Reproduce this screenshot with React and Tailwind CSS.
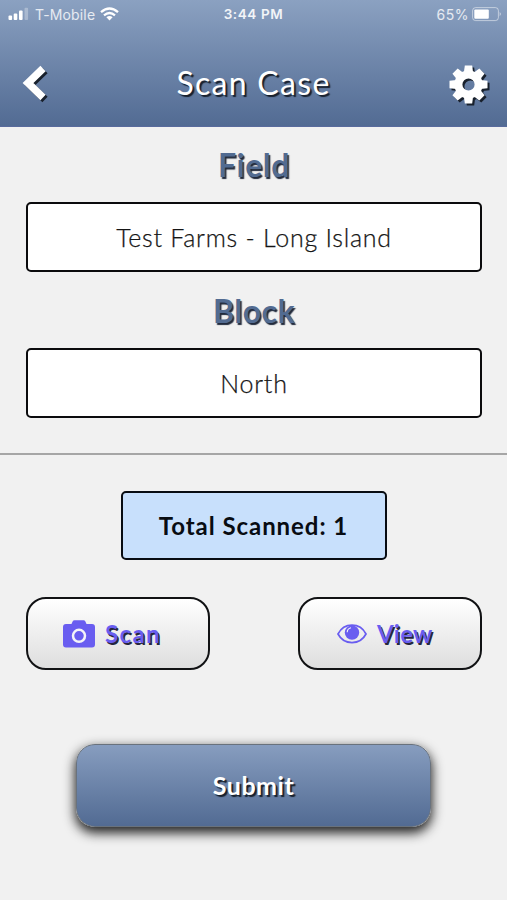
import React from 'react';

function SignalIcon() {
  return (
    <svg width="21" height="14" viewBox="0 0 21 14" fill="white">
      <rect x="0.5" y="8.5" width="3.6" height="4.5" rx="1" />
      <rect x="5.7" y="6.5" width="3.6" height="6.5" rx="1" />
      <rect x="11" y="3.5" width="3.6" height="9.5" rx="1" />
      <rect x="16.5" y="0.8" width="3.6" height="12.2" rx="1" opacity="0.3" />
    </svg>
  );
}

function WifiIcon() {
  return (
    <svg width="19" height="14" viewBox="0 0 19 14" fill="none" stroke="white" strokeWidth="2.3">
      <path d="M1 5.2Q9.5-2.2 18 5.2" />
      <path d="M4 8.3Q9.5 3.8 15 8.3" />
      <path d="M6.4 10.2Q9.5 7.8 12.6 10.2L9.5 13.5Z" fill="white" stroke="none" />
    </svg>
  );
}

function BatteryIcon() {
  return (
    <svg width="30" height="15" viewBox="0 0 30 15">
      <rect x="0.6" y="0.6" width="25.8" height="13" rx="3" fill="none" stroke="white" strokeOpacity="0.5" />
      <rect x="2.3" y="2.5" width="14.5" height="9.2" rx="1" fill="white" />
      <path d="M27.6 5Q30.4 7.1 27.6 9.2Z" fill="white" fillOpacity="0.5" />
    </svg>
  );
}

function GearIcon() {
  const teeth = [0, 45, 90, 135, 180, 225, 270, 315];

  return (
    <svg width="39" height="39" viewBox="-19.5 -19.5 39 39" fill="white" className="drop-shadow-[2px_2px_0.5px_#18202c]">
      {teeth.map((angle) => (
        <path key={angle} d="M-4.6-12L-3.7-19H3.7L4.6-12Z" transform={`rotate(${angle})`} />
      ))}
      <circle r="10.1" fill="none" stroke="white" strokeWidth="8" />
    </svg>
  );
}

function CameraIcon() {
  return (
    <svg width="32" height="28" viewBox="0 0 32 28" fill="#695df0">
      <path d="M3 4H8.5L9.6 1.5Q10.2.3 11.6.3H20.4Q21.8.3 22.4 1.5L23.5 4H29Q32 4 32 7V24.5Q32 27.5 29 27.5H3Q0 27.5 0 24.5V7Q0 4 3 4Z" />
      <circle cx="16" cy="15.8" r="6" fill="none" stroke="#f4f4f8" strokeWidth="2.5" />
    </svg>
  );
}

function EyeIcon() {
  return (
    <svg width="30" height="20" viewBox="0 0 30 20" fill="none">
      <path d="M1 10C7-1.8 23-1.8 29 10C23 21.4 7 21.4 1 10Z" stroke="#695df0" strokeWidth="1.7" />
      <circle cx="15" cy="8.6" r="7.2" fill="#695df0" />
      <path d="M10.2 8.2A4.8 4.8 0 0 1 14 3.7" stroke="#f6f6fa" strokeWidth="1.1" />
    </svg>
  );
}

function Field({ label, value, className }) {
  return (
    <div className={className}>
      <h2 className="h-[50px] text-center text-[32px] leading-[50px] font-bold tracking-[0.5px] text-[#526b91] [text-shadow:1.5px_1.5px_1px_#20293b]">
        {label}
      </h2>
      <div className="mt-[12px] flex h-[70px] items-center justify-center rounded-[5px] border-2 border-[#0b0b0d] bg-white pt-px text-[25px] font-light tracking-[0.75px] text-[#151515] [-webkit-text-stroke:0.25px_#151515]">
        {value}
      </div>
    </div>
  );
}

function ActionButton({ icon, label, className }) {
  return (
    <button className={`flex h-[73px] w-[184px] items-center rounded-[20px] border-2 border-[#111214] bg-linear-to-b from-white to-[#dedede] pl-[35px] text-[24px] font-bold text-[#695df0] [text-shadow:1.5px_1.5px_0.5px_#25253d] ${className}`}>
      {icon}
      <span>{label}</span>
    </button>
  );
}

export default function App() {
  return (
    <div className="h-[900px] w-full overflow-hidden bg-[#f1f1f1] font-[Lato,sans-serif]">
      <header className="h-[127px] border-b border-[#596b9d] bg-linear-to-b from-[#8ba1c1] to-[#526b93] text-white">
        <div className="grid h-[28px] grid-cols-3 items-center px-[8px] font-[Inter,sans-serif] text-[14px]">
          <div className="flex items-center">
            <SignalIcon />
            <span className="ml-[6px] mr-[5px] tracking-[0.15px] text-white/80">T-Mobile</span>
            <WifiIcon />
          </div>
          <span className="text-center text-[13.5px] font-semibold tracking-[0.6px] text-white/90">3:44 PM</span>
          <div className="-mr-[3px] flex items-center justify-end gap-[3px]">
            <span className="tracking-[0.5px] text-white/80">65%</span>
            <BatteryIcon />
          </div>
        </div>
        <div className="grid h-[98px] grid-cols-[60px_1fr_60px] pt-[37px]">
          <svg width="26" height="38" viewBox="0 0 26 38" className="ml-[22px] drop-shadow-[2px_2px_0.5px_#18202c]">
            <path d="M21 3.5L6 18L21 32.5" fill="none" stroke="white" strokeWidth="7.5" />
          </svg>
          <h1 className="text-center text-[32px] leading-[36px] font-normal tracking-[1.3px] [text-shadow:2px_2px_1px_#18202c]">Scan Case</h1>
          <div className="ml-[2px]"><GearIcon /></div>
        </div>
      </header>

      <main>
        <section className="h-[328px] border-b-2 border-[#a6a6a6] pt-[13px] pr-[25px] pl-[26px]">
          <Field label="Field" value="Test Farms - Long Island" />
          <Field label="Block" value="North" className="mt-[14px]" />
        </section>

        <div className="mx-auto mt-[36px] flex h-[69px] w-[266px] items-center justify-center rounded-[5px] border-2 border-[#080c12] bg-[#c8e0fc] text-[24px] font-bold tracking-[0.95px] text-[#080c12]">
          Total Scanned: 1
        </div>

        <div className="mt-[37px] flex justify-between pr-[25px] pl-[26px]">
          <ActionButton icon={<span className="mr-[10px]"><CameraIcon /></span>} label="Scan" className="tracking-[1.4px]" />
          <ActionButton icon={<span className="mr-[10px] ml-[2px]"><EyeIcon /></span>} label="View" className="tracking-[0.2px]" />
        </div>

        <button className="mx-auto mt-[74px] flex h-[83px] w-[355px] items-center justify-center rounded-[19px] border border-[#69727d] bg-linear-to-b from-[#879dbf] to-[#526b93] text-[25px] font-bold tracking-[0.5px] text-white shadow-[0_5px_12px_1px_#222] [text-shadow:2px_2px_1px_#18202c]">
          Submit
        </button>
      </main>
    </div>
  );
}
